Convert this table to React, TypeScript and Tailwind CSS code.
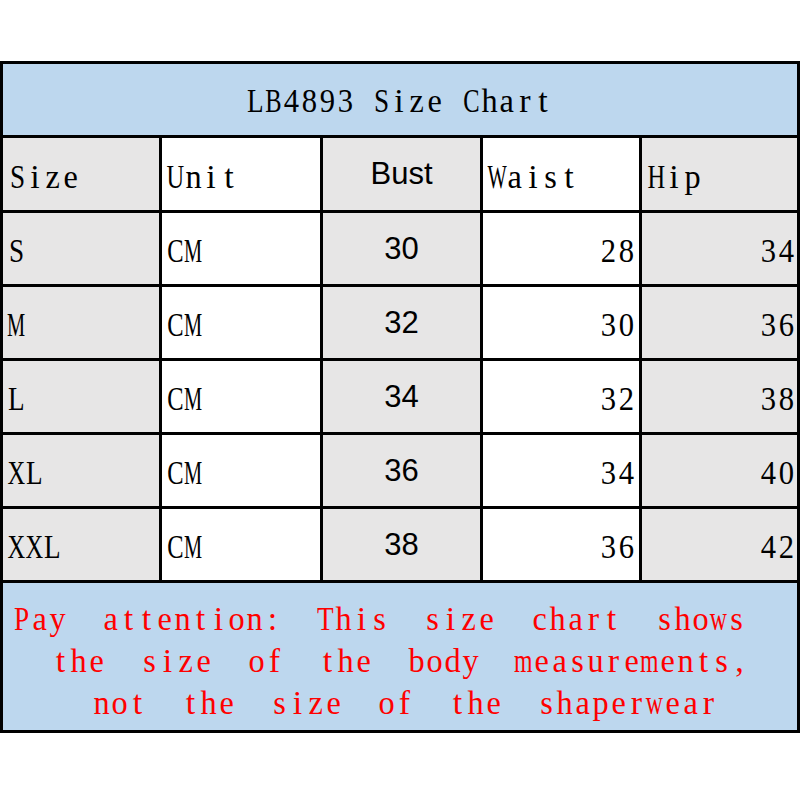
const rows = [
  { size: 'S', unit: 'CM', bust: 30, waist: 28, hip: 34 },
  { size: 'M', unit: 'CM', bust: 32, waist: 30, hip: 36 },
  { size: 'L', unit: 'CM', bust: 34, waist: 32, hip: 38 },
  { size: 'XL', unit: 'CM', bust: 36, waist: 34, hip: 40 },
  { size: 'XXL', unit: 'CM', bust: 38, waist: 36, hip: 42 },
];

const serif = "font-['Liberation_Serif','Times_New_Roman',serif] text-[34px] text-black";
const sans = "font-['Liberation_Sans',Arial,sans-serif] text-[31px] text-black";

// fixed-width cells so the serif face reads like the chart's monospaced font
const WIDE = new Set(['M', 'W']);
const WIDE_LOWER = new Set(['m', 'w']);
const BROAD = new Set(['X', 'H', 'C', 'B', 'U', 'D', 'N', 'K']);
const NARROW = new Set(['i', 'l', 'j', 't', 'f', 'r', 'I', '1', ':', ',', '.']);

function glyphClass(c: string) {
  if (WIDE.has(c)) return 'scale-x-[0.6]';
  if (WIDE_LOWER.has(c)) return 'scale-x-[0.7]';
  if (BROAD.has(c)) return 'scale-x-[0.72]';
  if (NARROW.has(c)) return '';
  if (c >= '0' && c <= '9') return 'scale-x-[0.9]';
  if (c >= 'a' && c <= 'z') return 'scale-x-[0.95]';
  return 'scale-x-[0.8]';
}

function Mono({ text, gap = false }: { text: string; gap?: boolean }) {
  return (
    <span className="inline-flex whitespace-pre">
      {[...text].map((c, i) =>
        c === ' ' ? (
          <span key={i} className={gap ? 'inline-block w-[35px]' : 'inline-block w-[18px]'}>
            {' '}
          </span>
        ) : (
          <span key={i} className="inline-flex w-[18px] justify-center">
            <span className={`inline-block ${glyphClass(c)}`}>{c}</span>
          </span>
        ),
      )}
    </span>
  );
}

export default function App() {
  return (
    <div className="w-[800px] h-[800px] bg-white pt-[61px]">
      <div className="w-[800px] bg-black pl-[3px] py-[3px] grid grid-cols-[156px_158px_157px_156px_155px] gap-[3px]">
        <div className={`col-span-5 h-[71px] bg-[#bdd7ee] flex items-center justify-center pr-[2px] pt-[2px] ${serif}`}>
          <Mono text="LB4893 Size Chart" />
        </div>

        <div className={`h-[72px] bg-[#e7e6e6] flex items-center pl-[5px] pt-[4px] ${serif}`}>
          <Mono text="Size" />
        </div>
        <div className={`h-[72px] bg-white flex items-center pl-[4px] pt-[4px] ${serif}`}>
          <Mono text="Unit" />
        </div>
        <div className={`h-[72px] bg-[#e7e6e6] flex items-center justify-center ${sans}`}>Bust</div>
        <div className={`h-[72px] bg-white flex items-center pl-[5px] pt-[4px] ${serif}`}>
          <Mono text="Waist" />
        </div>
        <div className={`h-[72px] bg-[#e7e6e6] flex items-center pl-[5px] pt-[4px] ${serif}`}>
          <Mono text="Hip" />
        </div>

        {rows.map((r) => (
          <div key={r.size} className="contents">
            <div className={`h-[71px] bg-[#e7e6e6] flex items-center pl-[4px] pt-[4px] ${serif}`}>
              <Mono text={r.size} />
            </div>
            <div className={`h-[71px] bg-white flex items-center pl-[4px] pt-[4px] ${serif}`}>
              <Mono text={r.unit} />
            </div>
            <div className={`h-[71px] bg-[#e7e6e6] flex items-center justify-center pt-[2px] ${sans}`}>
              {r.bust}
            </div>
            <div className={`h-[71px] bg-white flex items-center justify-end pr-[4px] pt-[4px] ${serif}`}>
              <Mono text={String(r.waist)} />
            </div>
            <div className={`h-[71px] bg-[#e7e6e6] flex items-center justify-end pr-[2px] pt-[4px] ${serif}`}>
              <Mono text={String(r.hip)} />
            </div>
          </div>
        ))}

        <div className="col-span-5 h-[147px] bg-[#bdd7ee] flex flex-col items-center justify-center font-['Liberation_Serif','Times_New_Roman',serif] text-[34px] text-[#f00] leading-[42px] pt-[8px]">
          <div className="-ml-[42px]">
            <Mono text="Pay attention: This size chart shows" gap />
          </div>
          <div>
            <Mono text="the size of the body measurements," gap />
          </div>
          <div className="ml-[10px]">
            <Mono text="not the size of the shaperwear" gap />
          </div>
        </div>
      </div>
    </div>
  );
}
